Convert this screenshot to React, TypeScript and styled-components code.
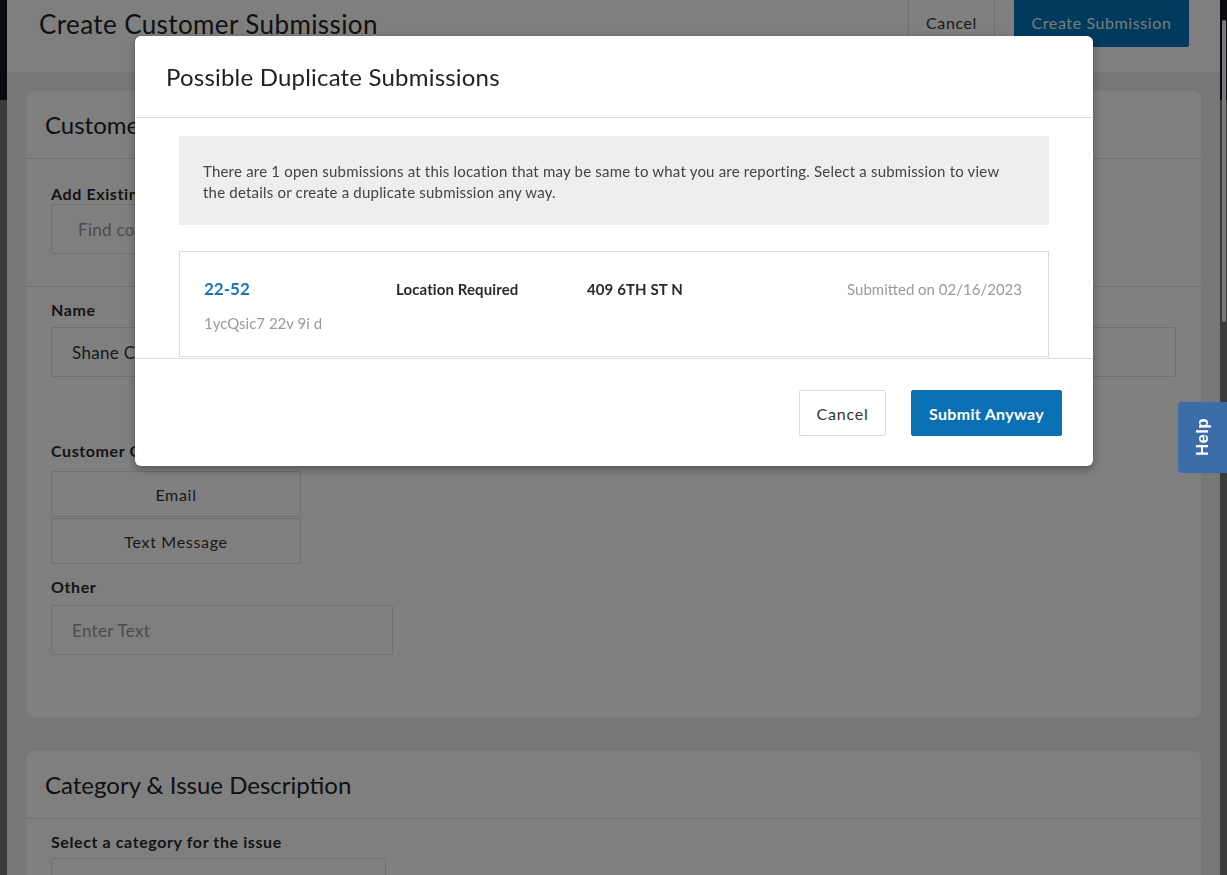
import React from "react";
import styled, { createGlobalStyle } from "styled-components";

const Global = createGlobalStyle`
  html, body { margin: 0; padding: 0; height: 100%; overflow: hidden; }
  body { font-family: Lato, "Noto Sans", sans-serif; color: #222; }
  #root { height: 100%; }
  * { box-sizing: border-box; }
`;

const Frame = styled.div`
  display: flex;
  width: 1227px;
  height: 875px;
  overflow: hidden;
`;

const Rail = styled.div`
  width: 7px;
  flex: none;
  display: flex;
  flex-direction: column;
  background: #767676;
  &::before {
    content: "";
    height: 100px;
    flex: none;
    background: #151520;
  }
`;

const ScrollRail = styled(Rail)`
  position: relative;
`;

const Thumb = styled.div`
  position: absolute;
  left: 2px;
  right: 1px;
  top: 20px;
  height: 302px;
  border-radius: 2px;
  background: #f4f4f4;
`;

const Main = styled.div`
  flex: 1;
  display: flex;
  flex-direction: column;
  background: #eeeeee;
  overflow: hidden;
`;

const Header = styled.header`
  height: 72px;
  flex: none;
  background: #fff;
  display: flex;
  align-items: center;
  justify-content: space-between;
  padding: 0 31px 25px 32px;
`;

const PageTitle = styled.h1`
  margin: 0;
  font-size: 26px;
  font-weight: 400;
  letter-spacing: 0.4px;
  color: #222;
`;

const HeaderActions = styled.div`
  display: flex;
  gap: 19px;
  margin-top: -2px;
`;

const Button = styled.button<{ $primary?: boolean; $w: number }>`
  width: ${(p) => p.$w}px;
  height: 46px;
  border-radius: 2px;
  font-family: inherit;
  font-size: 16px;
  letter-spacing: ${(p) => (p.$primary ? "0.3px" : "0.8px")};
  font-weight: ${(p) => (p.$primary ? 700 : 400)};
  color: ${(p) => (p.$primary ? "#fff" : "#333")};
  background: ${(p) => (p.$primary ? "#0b70b3" : "#fff")};
  border: 1px solid ${(p) => (p.$primary ? "#0b70b3" : "#dcdcdc")};
  padding: 0;
  cursor: pointer;
`;

const HeaderButton = styled(Button)`
  height: 48px;
  font-weight: 400;
  letter-spacing: 0.6px;
  background: ${(p) => (p.$primary ? "#0074b8" : "#fff")};
  border-color: ${(p) => (p.$primary ? "#0074b8" : "#dcdcdc")};
  color: ${(p) => (p.$primary ? "#eef4f8" : "#333")};
`;

const Content = styled.div`
  padding: 19px 19px 0;
  display: flex;
  flex-direction: column;
  gap: 33px;
`;

const Card = styled.section<{ $h?: number }>`
  background: #fff;
  border-radius: 8px;
  ${(p) => (p.$h ? `height: ${p.$h}px;` : "")}
  flex: none;
`;

const CardHeader = styled.div`
  height: 68px;
  padding: 0 19px;
  display: flex;
  align-items: center;
  border-bottom: 1px solid #e0e0e0;
`;

const CardTitle = styled.h2`
  margin: 0;
  font-size: 24px;
  font-weight: 400;
  color: #222;
`;

const Section = styled.div<{ $pt: number; $pb: number; $divider?: boolean }>`
  padding: ${(p) => p.$pt}px 25px ${(p) => p.$pb}px;
  ${(p) => (p.$divider ? "border-bottom: 1px solid #e0e0e0;" : "")}
`;

const Label = styled.div<{ $mb: number; $mt?: number }>`
  font-size: 16px;
  line-height: 20px;
  font-weight: 700;
  letter-spacing: 0.6px;
  color: #2a2a2a;
  margin-bottom: ${(p) => p.$mb}px;
  margin-top: ${(p) => p.$mt ?? 0}px;
`;

const Input = styled.div<{ $w?: number; $pl?: number; $placeholder?: boolean }>`
  width: ${(p) => (p.$w ? `${p.$w}px` : "100%")};
  height: 50px;
  border: 1px solid #dedede;
  border-radius: 2px;
  display: flex;
  align-items: center;
  padding-left: ${(p) => p.$pl ?? 20}px;
  font-size: 17px;
  color: ${(p) => (p.$placeholder ? "#999" : "#333")};
  letter-spacing: 0.3px;
`;

const TwoCol = styled.div`
  display: grid;
  grid-template-columns: 1fr 1fr;
  gap: 24px;
`;

const ToggleGroup = styled.div`
  display: flex;
  flex-direction: column;
  gap: 1px;
  width: 250px;
`;

const Toggle = styled.div`
  height: 46px;
  border: 1px solid #dedede;
  border-radius: 2px;
  display: flex;
  align-items: center;
  justify-content: center;
  font-size: 16px;
  letter-spacing: 0.7px;
  color: #333;
`;

const Overlay = styled.div`
  position: fixed;
  inset: 0;
  background: rgba(0, 0, 0, 0.5);
`;

const Modal = styled.div`
  position: fixed;
  left: 135px;
  top: 36px;
  width: 958px;
  background: #fff;
  border-radius: 6px;
  box-shadow: 0 3px 8px rgba(0, 0, 0, 0.35);
  overflow: hidden;
`;

const ModalHeader = styled.div`
  height: 82px;
  padding: 0 31px;
  display: flex;
  align-items: center;
  border-bottom: 1px solid #dedede;
`;

const ModalTitle = styled.h3`
  margin: 0;
  font-size: 24px;
  font-weight: 400;
  color: #222;
  letter-spacing: 0.2px;
`;

const ModalBody = styled.div`
  height: 240px;
  overflow: hidden;
  padding: 18px 44px 0;
`;

const Notice = styled.div`
  background: #eeeeee;
  padding: 25px 24px 22px;
  font-size: 15px;
  line-height: 21px;
  letter-spacing: 0.2px;
  color: #444;
`;

const Result = styled.div`
  margin-top: 26px;
  border: 1px solid #dcdcdc;
  padding: 26px 26px 23px 24px;
  display: grid;
  grid-template-columns: 192px 191px 1fr auto;
  row-gap: 13px;
  align-items: center;
`;

const ResultId = styled.a`
  font-size: 17px;
  line-height: 22px;
  font-weight: 700;
  color: #1774ba;
  text-decoration: none;
`;

const ResultStrong = styled.span`
  font-size: 15px;
  line-height: 22px;
  font-weight: 700;
  color: #2a2a2a;
  letter-spacing: 0.1px;
`;

const ResultMuted = styled.span<{ $span?: boolean }>`
  font-size: 15px;
  line-height: 20px;
  color: #9a9a9a;
  ${(p) => (p.$span ? "grid-column: 1 / -1;" : "")}
`;

const ModalFooter = styled.div`
  border-top: 1px solid #dedede;
  padding: 31px 31px 30px;
  display: flex;
  justify-content: flex-end;
  gap: 25px;
`;

const HelpTab = styled.button`
  position: fixed;
  right: 0;
  top: 402px;
  width: 49px;
  height: 71px;
  border: none;
  border-radius: 4px 0 0 4px;
  background: #3b6ea9;
  display: flex;
  align-items: center;
  justify-content: center;
  padding: 0;
  cursor: pointer;
`;

const HelpText = styled.span`
  writing-mode: vertical-rl;
  transform: rotate(180deg);
  color: #fff;
  font-family: inherit;
  font-weight: 700;
  font-size: 17px;
  letter-spacing: 0.3px;
`;

export default function App() {
  return (
    <>
      <Global />
      <Frame>
        <Rail />
        <Main>
          <Header>
            <PageTitle>Create Customer Submission</PageTitle>
            <HeaderActions>
              <HeaderButton $w={87}>Cancel</HeaderButton>
              <HeaderButton $primary $w={175}>
                Create Submission
              </HeaderButton>
            </HeaderActions>
          </Header>
          <Content>
            <Card $h={627}>
              <CardHeader>
                <CardTitle>Customer Information</CardTitle>
              </CardHeader>
              <Section $pt={25} $pb={32} $divider>
                <Label $mb={0}>Add Existing Customer</Label>
                <Input $w={540} $pl={26} $placeholder>
                  Find contact by name, email or phone
                </Input>
              </Section>
              <Section $pt={13} $pb={0}>
                <TwoCol>
                  <div>
                    <Label $mb={7}>Name</Label>
                    <Input>Shane CEA</Input>
                  </div>
                  <div>
                    <Label $mb={7}>Phone</Label>
                    <Input $placeholder>Enter Phone</Input>
                  </div>
                </TwoCol>
                <Label $mt={64} $mb={10}>
                  Customer Contact Preference
                </Label>
                <ToggleGroup>
                  <Toggle>Email</Toggle>
                  <Toggle>Text Message</Toggle>
                </ToggleGroup>
                <Label $mt={13} $mb={8}>
                  Other
                </Label>
                <Input $w={342} $placeholder>
                  Enter Text
                </Input>
              </Section>
            </Card>
            <Card>
              <CardHeader>
                <CardTitle>Category &amp; Issue Description</CardTitle>
              </CardHeader>
              <Section $pt={13} $pb={40}>
                <Label $mb={6}>Select a category for the issue</Label>
                <Input $w={335} $placeholder />
              </Section>
            </Card>
          </Content>
        </Main>
        <ScrollRail>
          <Thumb />
        </ScrollRail>
      </Frame>
      <Overlay />
      <Modal>
        <ModalHeader>
          <ModalTitle>Possible Duplicate Submissions</ModalTitle>
        </ModalHeader>
        <ModalBody>
          <Notice>
            There are 1 open submissions at this location that may be same to what you are
            reporting. Select a submission to view
            <br />
            the details or create a duplicate submission any way.
          </Notice>
          <Result>
            <ResultId href="#">22-52</ResultId>
            <ResultStrong>Location Required</ResultStrong>
            <ResultStrong>409 6TH ST N</ResultStrong>
            <ResultMuted>Submitted on 02/16/2023</ResultMuted>
            <ResultMuted $span>1ycQsic7 22v 9i d</ResultMuted>
          </Result>
        </ModalBody>
        <ModalFooter>
          <Button $w={87}>Cancel</Button>
          <Button $primary $w={151}>
            Submit Anyway
          </Button>
        </ModalFooter>
      </Modal>
      <HelpTab>
        <HelpText>Help</HelpText>
      </HelpTab>
    </>
  );
}
